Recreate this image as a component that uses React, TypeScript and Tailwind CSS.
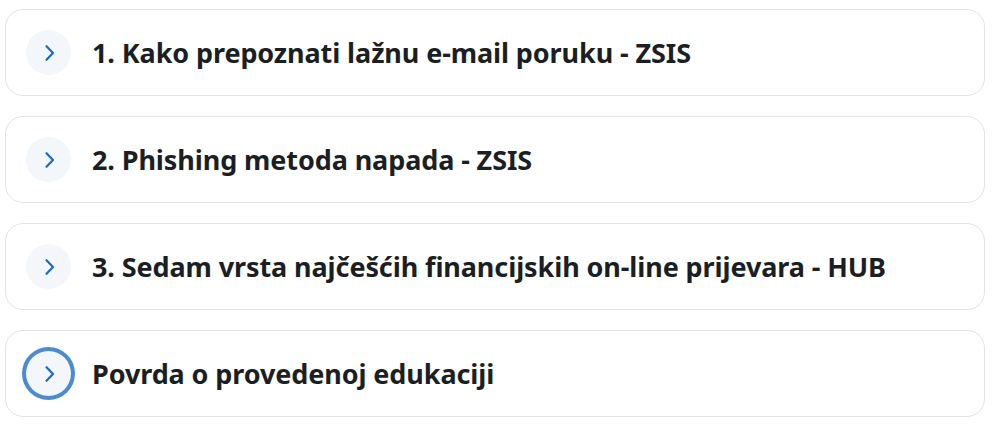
import React from "react";

const items = [
  "1. Kako prepoznati lažnu e-mail poruku - ZSIS",
  "2. Phishing metoda napada - ZSIS",
  "3. Sedam vrsta najčešćih financijskih on-line prijevara - HUB",
  "Povrda o provedenoj edukaciji",
];

function Chevron() {
  return (
    <svg width="18" height="18" viewBox="0 0 18 18" fill="none" stroke="#1a6cc0" strokeWidth="2.2" strokeLinecap="round" strokeLinejoin="round">
      <path d="M6.5 2.2L13 9l-6.5 6.8" />
    </svg>
  );
}

export default function App() {
  return (
    <div className="bg-white w-[992px] h-[426px] pt-[9px] pl-[5px]" style={{ fontFamily: '"Noto Sans", "Open Sans", sans-serif' }}>
      <div className="flex flex-col gap-[20px] w-[980px]">
        {items.map((t, i) => (
          <div key={i} className="h-[87px] border border-[#e1e3e6] rounded-[18px] flex items-center pl-[20px]">
            <div
              className={
                "w-[45px] h-[45px] rounded-full bg-[#f3f6fa] flex items-center justify-center shrink-0 " +
                (i === 3 ? "ring-[4px] ring-[#4a8ccf]" : "")
              }
            >
              <Chevron />
            </div>
            <span className="ml-[21px] text-[27px] font-bold text-[#1b1f24] leading-none tracking-[-0.1px]">{t}</span>
          </div>
        ))}
      </div>
    </div>
  );
}
